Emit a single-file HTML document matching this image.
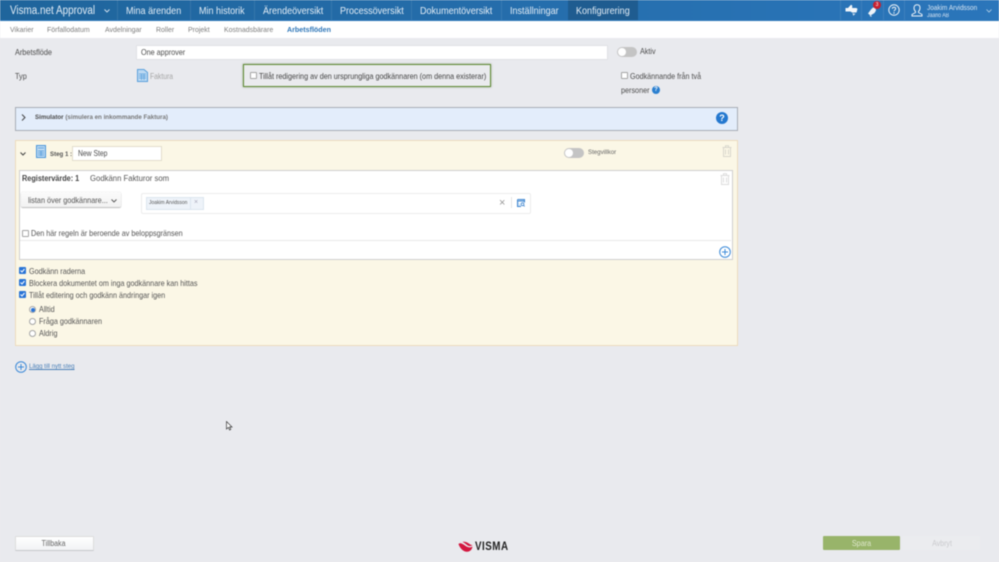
<!DOCTYPE html>
<html lang="sv">
<head>
<meta charset="utf-8">
<title>Visma.net Approval</title>
<style>
html,body{margin:0;padding:0;width:999px;height:562px;overflow:hidden;background:#e9eaee}
#r{position:relative;width:999px;height:562px;overflow:hidden;background:#e9eaee;font-family:"Liberation Sans",sans-serif;color:#4a4a4a;filter:blur(.4px)}
#r div,#r span.a,#r svg{position:absolute}
.t{position:absolute;white-space:nowrap;font-size:8.5px;line-height:12px;color:#4c4c4c;transform:scaleX(var(--s,.86));transform-origin:0 50%}
.c{transform-origin:50% 50%}
.n{position:absolute;top:1px;height:20px;line-height:20px;color:#e3edf6;font-size:10.5px;white-space:nowrap;transform:scaleX(.86);transform-origin:0 50%}
.sep{top:0;width:1px;height:20px;background:rgba(255,255,255,.09)}
.cb{width:5px;height:5px;border:1px solid #a5a5a5;border-radius:1px;background:#fff}
.cc{width:7px;height:7px;border-radius:1px;background:#2a74d6}
.rd{width:5px;height:5px;border:1px solid #a5a5a5;border-radius:50%;background:#fff}
.sw{width:20px;height:10px;border-radius:5px;background:#c4c4c4}
.sw:after{content:"";position:absolute;left:1px;top:1px;width:8px;height:8px;border-radius:50%;background:#fff}
</style>
</head>
<body>
<div id="r">
  <!-- top bar -->
  <div style="left:0;top:0;width:999px;height:20px;background:linear-gradient(90deg,#1f659c,#2b76bb)"></div>
  <div style="left:0;top:20px;width:999px;height:1px;background:#2d77b9"></div>
  <div style="left:568px;top:0;width:70px;height:20px;background:#1f5c90"></div>
  <span class="n" style="left:10px;font-size:11.5px">Visma.net Approval</span>
  <svg style="left:104px;top:9px" width="6" height="4" viewBox="0 0 6 4"><path d="M.5.5 3 3 5.5.5" fill="none" stroke="#d5e3f0" stroke-width=".9"/></svg>
  <div class="sep" style="left:117px"></div>
  <span class="n" style="left:126px">Mina ärenden</span>
  <div class="sep" style="left:190px"></div>
  <span class="n" style="left:199px">Min historik</span>
  <div class="sep" style="left:254px"></div>
  <span class="n" style="left:263px">Ärendeöversikt</span>
  <div class="sep" style="left:331px"></div>
  <span class="n" style="left:340px">Processöversikt</span>
  <div class="sep" style="left:411px"></div>
  <span class="n" style="left:420px">Dokumentöversikt</span>
  <div class="sep" style="left:501px"></div>
  <span class="n" style="left:510px">Inställningar</span>
  <span class="n" style="left:576px">Konfigurering</span>
  <div class="sep" style="left:840px"></div>
  <div class="sep" style="left:861px"></div>
  <div class="sep" style="left:883px"></div>
  <div class="sep" style="left:904px"></div>
  <!-- thumbs icon -->
  <svg style="left:845px;top:4px" width="13" height="12" viewBox="0 0 13 12"><path d="M.5 4H3L6 .8 7.2 1.5V4H11.5L12.5 5 11.5 8.5H7L5.5 7.5H.5Z" fill="#f2f6fa"/><path d="M8 9 8.5 11 10 9.5" fill="none" stroke="#f2f6fa" stroke-width=".8"/></svg>
  <!-- bell -->
  <svg style="left:867px;top:5px" width="12" height="12" viewBox="0 0 12 12"><path d="M1 8.5 4 4.5 6 2.5 8.5 3 9 5.5 7.5 8 3.5 10.5Z" fill="#eef3f8"/><path d="M3 10.5 4.5 11.5" stroke="#eef3f8" stroke-width="1"/></svg>
  <div style="left:873px;top:1px;width:8px;height:8px;border-radius:50%;background:#c8202f;color:#fff;font-size:5px;line-height:8px;text-align:center">3</div>
  <!-- help -->
  <svg style="left:888px;top:4px" width="12" height="12" viewBox="0 0 12 12"><circle cx="6" cy="6" r="5.2" fill="none" stroke="#eef3f8" stroke-width="1"/><path d="M4.3 4.8C4.3 2.8 7.7 2.8 7.7 4.8 7.7 6 6 6 6 7.3" fill="none" stroke="#eef3f8" stroke-width="1"/><circle cx="6" cy="9" r=".7" fill="#eef3f8"/></svg>
  <!-- user -->
  <svg style="left:911px;top:4px" width="12" height="13" viewBox="0 0 12 13"><path d="M6 .8C8 .8 9 2.2 9 4 9 5.8 8 7 7.5 7.5V8.5L11 10.5V12H1V10.5L4.5 8.5V7.5C4 7 3 5.8 3 4 3 2.2 4 .8 6 .8Z" fill="none" stroke="#eef3f8" stroke-width="1"/></svg>
  <span class="n" style="left:927px;top:3px;height:10px;line-height:10px;font-size:7.5px;color:#d8e6f3">Joakim Arvidsson</span>
  <span class="n" style="left:927px;top:12px;height:8px;line-height:8px;font-size:6px;color:#d8e6f3">Jaario AB</span>
  <svg style="left:986px;top:9px" width="6" height="4" viewBox="0 0 6 4"><path d="M.5.5 3 3 5.5.5" fill="none" stroke="#b9d2e8" stroke-width=".8"/></svg>

  <!-- sub nav -->
  <div style="left:0;top:21px;width:999px;height:17px;background:#fff"></div>
  <span class="t" style="--s:.93;left:10px;top:24px;color:#7d7d7d;font-size:7.5px">Vikarier</span>
  <span class="t" style="--s:.93;left:47px;top:24px;color:#7d7d7d;font-size:7.5px">Förfallodatum</span>
  <span class="t" style="--s:.93;left:105px;top:24px;color:#7d7d7d;font-size:7.5px">Avdelningar</span>
  <span class="t" style="--s:.93;left:156px;top:24px;color:#7d7d7d;font-size:7.5px">Roller</span>
  <span class="t" style="--s:.93;left:188px;top:24px;color:#7d7d7d;font-size:7.5px">Projekt</span>
  <span class="t" style="--s:.93;left:224px;top:24px;color:#7d7d7d;font-size:7.5px">Kostnadsbärare</span>
  <span class="t" style="--s:.95;left:287px;top:24px;color:#2e76b8;font-size:7.5px;font-weight:bold">Arbetsflöden</span>

  <!-- form top -->
  <span class="t" style="left:15px;top:46px">Arbetsflöde</span>
  <div style="left:136px;top:45px;width:470px;height:13px;background:#fff;border:1px solid #e0e1e5;border-radius:1px"></div>
  <span class="t" style="--s:.85;left:141px;top:46px">One approver</span>
  <div class="sw" style="left:617px;top:47px"></div>
  <span class="t" style="--s:.9;left:640px;top:46px;font-size:8px">Aktiv</span>

  <span class="t" style="left:15px;top:70px">Typ</span>
  <svg style="left:137px;top:69px" width="11" height="13" viewBox="0 0 11 13"><path d="M.5.5H7L10.5 3.5V12.5H.5Z" fill="#bcd9f2" stroke="#5aa0dc"/><path d="M2 5H9M2 7H9M2 9H9M4.5 5V11M7 5V11" stroke="#5aa0dc" stroke-width=".7"/></svg>
  <span class="t" style="--s:.8;left:150px;top:70px;color:#a5a5a5">Faktura</span>

  <div style="left:243px;top:63.5px;width:246px;height:21.5px;border:1.5px solid #5d8a32;box-shadow:0 0 2px rgba(60,90,30,.5);background:#eaebee"></div>
  <div class="cb" style="left:250px;top:72px"></div>
  <span class="t" style="--s:.84;left:259px;top:70px;font-size:8.6px;color:#444">Tillåt redigering av den ursprungliga godkännaren (om denna existerar)</span>

  <div class="cb" style="left:621px;top:72px"></div>
  <span class="t" style="--s:.845;left:630px;top:70px">Godkännande från två</span>
  <span class="t" style="--s:.85;left:621px;top:84px">personer</span>
  <div style="left:652px;top:86px;width:8px;height:8px;border-radius:50%;background:#2a7fd0;color:#fff;font-size:6px;line-height:8px;text-align:center;font-weight:bold">?</div>

  <!-- simulator -->
  <div style="left:15px;top:107px;width:721px;height:22px;background:#e3edfb;border:1px solid #a8adb5"></div>
  <svg style="left:21px;top:114px" width="5" height="7" viewBox="0 0 5 7"><path d="M1 .5 4 3.5 1 6.5" fill="none" stroke="#444" stroke-width="1"/></svg>
  <span class="t" style="--s:.94;left:35px;top:113px;font-size:6.6px;color:#666;line-height:9px"><b style="color:#4c4c4c">Simulator</b> <b style="color:#777">(simulera en inkommande Faktura)</b></span>
  <div style="left:716px;top:112px;width:12px;height:12px;border-radius:50%;background:#2478cf;color:#fff;font-size:9px;line-height:12px;text-align:center;font-weight:bold">?</div>

  <!-- step panel -->
  <div style="left:15px;top:140px;width:721px;height:204px;background:#fbf7e6;border:1px solid #eddcbd"></div>
  <svg style="left:20px;top:152px" width="6" height="4" viewBox="0 0 6 4"><path d="M.5.5 3 3 5.5.5" fill="none" stroke="#444" stroke-width="1"/></svg>
  <svg style="left:36px;top:145px" width="10" height="13" viewBox="0 0 10 13"><path d="M.5.5H9.5V12.5H.5Z" fill="#bcd9f2" stroke="#4b96da"/><path d="M2 3H8M2 6H8M2 8H8M2 10H8M5 6V11" stroke="#4b96da" stroke-width=".7"/></svg>
  <span class="t" style="--s:.9;left:50px;top:149px;font-size:6.8px;font-weight:bold;color:#555">Steg 1 :</span>
  <div style="left:72px;top:146px;width:88px;height:13px;background:#fff;border:1px solid #e2ddcc"></div>
  <span class="t" style="--s:.83;left:78px;top:148px;font-size:8.2px">New Step</span>
  <div class="sw" style="left:564px;top:148px"></div>
  <span class="t" style="--s:.9;left:588px;top:147px;font-size:6.8px;color:#666">Stegvillkor</span>
  <svg style="left:722px;top:145px" width="10" height="12" viewBox="0 0 10 12"><path d="M.5 2.5H9.5M3.5 2.5V.8H6.5V2.5M1.5 2.5V11.5H8.5V2.5M3.5 4.5V9.5M6.5 4.5V9.5" fill="none" stroke="#d9d7cd" stroke-width="1"/></svg>

  <!-- inner white -->
  <div style="left:19px;top:170px;width:712px;height:88px;background:#fff;border:1px solid #cfcfcf"></div>
  <span class="t" style="--s:.85;left:22px;top:172px;font-size:8.6px;font-weight:bold;color:#444">Registervärde: 1</span>
  <span class="t" style="--s:.9;left:90px;top:172px;font-size:8.6px;color:#555">Godkänn Fakturor som</span>
  <svg style="left:720px;top:173px" width="10" height="12" viewBox="0 0 10 12"><path d="M.5 2.5H9.5M3.5 2.5V.8H6.5V2.5M1.5 2.5V11.5H8.5V2.5M3.5 4.5V9.5M6.5 4.5V9.5" fill="none" stroke="#dcdcdc" stroke-width="1"/></svg>

  <div style="left:21px;top:192px;width:100px;height:15px;background:linear-gradient(#fbfbfb,#f2f2f2);border-radius:2px;box-shadow:0 1px 1px #bbb,0 0 1px #ccc"></div>
  <span class="t" style="--s:.87;left:28px;top:194px;font-size:8.4px;color:#555">listan över godkännare...</span>
  <svg style="left:111px;top:199px" width="6" height="4" viewBox="0 0 6 4"><path d="M.5.5 3 3 5.5.5" fill="none" stroke="#555" stroke-width=".9"/></svg>

  <div style="left:141px;top:193px;width:388px;height:19px;background:#fff;border:1px solid #ececec;border-radius:2px"></div>
  <div style="left:146px;top:197px;width:56px;height:11px;background:#eef3f9;border:1px solid #dce5ef"></div>
  <span class="t" style="--s:.85;left:149px;top:197px;font-size:5.8px;line-height:12px;color:#555">Joakim Arvidsson</span>
  <div style="left:190px;top:197px;width:1px;height:12px;background:#dce5ef"></div>
  <span class="t" style="--s:1;left:194px;top:197px;font-size:7px;color:#aab">×</span>
  <span class="t" style="--s:1;left:499px;top:197px;font-size:11px;color:#999">×</span>
  <div style="left:511px;top:197px;width:1px;height:11px;background:#e4e4e4"></div>
  <svg style="left:517px;top:199px" width="8" height="8" viewBox="0 0 8 8"><path d="M.5.5H7.5V3.5M.5.5V7.5H4" fill="#cfe3f6" stroke="#3f86d0"/><path d="M.5 2H7.5" stroke="#3f86d0"/><circle cx="5.5" cy="5.2" r="1.4" fill="none" stroke="#3f86d0" stroke-width=".8"/><path d="M6.5 6.3 7.7 7.5" stroke="#3f86d0" stroke-width=".8"/></svg>

  <div class="cb" style="left:22px;top:230px"></div>
  <span class="t" style="--s:.87;left:31px;top:227px;font-size:8.3px;color:#555">Den här regeln är beroende av beloppsgränsen</span>
  <div style="left:20px;top:240px;width:711px;height:1px;background:#e8e8e8"></div>
  <svg style="left:719px;top:246px" width="12" height="12" viewBox="0 0 12 12"><circle cx="6" cy="6" r="5.3" fill="#fff" stroke="#3c8ad8" stroke-width="1"/><path d="M3 6H9M6 3V9" stroke="#3c8ad8" stroke-width="1"/></svg>

  <!-- checks -->
  <div class="cc" style="left:19px;top:267px"></div>
  <svg style="left:20px;top:268px" width="5" height="5" viewBox="0 0 5 5"><path d="M.5 2.5 2 4 4.5 1" fill="none" stroke="#fff" stroke-width="1"/></svg>
  <span class="t" style="--s:.87;left:29px;top:265px;font-size:8.3px;color:#555">Godkänn raderna</span>
  <div class="cc" style="left:19px;top:279px"></div>
  <svg style="left:20px;top:280px" width="5" height="5" viewBox="0 0 5 5"><path d="M.5 2.5 2 4 4.5 1" fill="none" stroke="#fff" stroke-width="1"/></svg>
  <span class="t" style="--s:.87;left:29px;top:277px;font-size:8.3px;color:#555">Blockera dokumentet om inga godkännare kan hittas</span>
  <div class="cc" style="left:19px;top:291px"></div>
  <svg style="left:20px;top:292px" width="5" height="5" viewBox="0 0 5 5"><path d="M.5 2.5 2 4 4.5 1" fill="none" stroke="#fff" stroke-width="1"/></svg>
  <span class="t" style="--s:.87;left:29px;top:289px;font-size:8.3px;color:#555">Tillåt editering och godkänn ändringar igen</span>

  <div class="rd" style="left:29px;top:306px"></div>
  <div style="left:30.5px;top:307.5px;width:4px;height:4px;border-radius:50%;background:#2a74d6"></div>
  <span class="t" style="--s:.87;left:39px;top:303px;font-size:8.3px;color:#555">Alltid</span>
  <div class="rd" style="left:29px;top:318px"></div>
  <span class="t" style="--s:.87;left:39px;top:315px;font-size:8.3px;color:#555">Fråga godkännaren</span>
  <div class="rd" style="left:29px;top:330px"></div>
  <span class="t" style="--s:.87;left:39px;top:327px;font-size:8.3px;color:#555">Aldrig</span>

  <!-- add step -->
  <svg style="left:15px;top:361px" width="12" height="12" viewBox="0 0 12 12"><circle cx="6" cy="6" r="5.3" fill="none" stroke="#3c8ad8" stroke-width="1"/><path d="M3 6H9M6 3V9" stroke="#3c8ad8" stroke-width="1"/></svg>
  <span class="t" style="--s:.92;left:29px;top:361px;font-size:6.6px;color:#4b80b8;text-decoration:underline">Lägg till nytt steg</span>

  <!-- cursor -->
  <svg style="left:226px;top:421px" width="7" height="10" viewBox="0 0 7 10"><path d="M.5.5V8L2.4 6.4 3.6 9 4.8 8.4 3.6 6H6Z" fill="#fff" stroke="#333" stroke-width=".7"/></svg>

  <!-- footer -->
  <div style="left:15px;top:536px;width:77px;height:13px;background:linear-gradient(#fff,#f2f3f5);border:.5px solid #ddd;border-bottom:1.5px solid #c5c7cb;border-radius:1px"></div>
  <span class="t c" style="--s:.88;left:15px;top:538px;width:77px;text-align:center;font-size:8px;color:#666">Tillbaka</span>
  <svg style="left:458px;top:541px" width="15" height="12" viewBox="0 0 15 12"><path d="M.5 3C2 1.5 4 2.3 7 4.5 10 6.6 12 7 14.5 5.5 14 9 11.5 11 8.5 10.7 5 10.3 2 7.5.5 3ZM4.5 1C6.5.3 9 1.2 11 2.6 12.5 3.8 13.8 4.2 14.5 4 13 5.5 11 5.5 9 4 7.5 2.8 6 1.6 4.5 1Z" fill="#d3173f"/></svg>
  <span class="t" style="--s:.85;left:475px;top:541px;font-size:11.5px;line-height:12px;font-weight:bold;color:#222;letter-spacing:.6px">VISMA</span>
  <div style="left:823px;top:536px;width:77px;height:14px;background:#98b46a;border-radius:1px"></div>
  <span class="t c" style="--s:.88;left:823px;top:538px;width:77px;text-align:center;font-size:8.2px;color:#dfe8cd">Spara</span>
  <div style="left:902px;top:536px;width:78px;height:14px;background:#ebecef"></div>
  <span class="t c" style="--s:.88;left:902px;top:538px;width:80px;text-align:center;font-size:8px;color:#c9cacd">Avbryt</span>
</div>
</body>
</html>
